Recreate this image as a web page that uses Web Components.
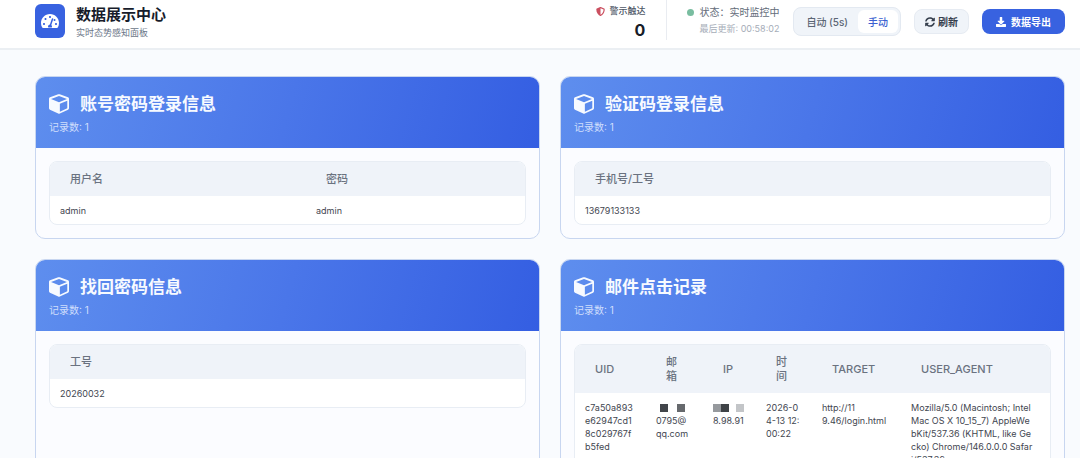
<!DOCTYPE html>
<html lang="zh-CN">
<head>
<meta charset="utf-8">
<title>数据展示中心</title>
<style>
html, body { margin: 0; background: #f9fbfe; }
body { font-family: Inter, "Noto Sans CJK SC", sans-serif; font-size: 10px; line-height: 14px; color: #3f4856; overflow: hidden; }
</style>
</head>
<body>
<data-dashboard></data-dashboard>

<template id="t-dashboard">
<style>
:host { display: block; }
main { display: grid; grid-template-columns: 1fr 1fr; gap: 20px; padding: 26px 15px 26px 35px; }
</style>
<top-bar></top-bar>
<main>
  <info-card heading="账号密码登录信息" count="1">
    <data-table data='{"cols":["用户名","密码"],"widths":[256,0],"row":["admin","admin"]}'></data-table>
  </info-card>
  <info-card heading="验证码登录信息" count="1">
    <data-table data='{"cols":["手机号/工号"],"widths":[0],"row":["13679133133"]}'></data-table>
  </info-card>
  <info-card heading="找回密码信息" count="1">
    <data-table data='{"cols":["工号"],"widths":[0],"row":["20260032"]}'></data-table>
  </info-card>
  <info-card heading="邮件点击记录" count="1">
    <data-table data='{"cols":["UID","邮箱","IP","时间","TARGET","USER_AGENT"],"widths":[71,57,53,56,89,0],"row":["c7a50a893e62947cd18c029767fb5fed","[mail]0795@|qq.com","[ip]8.98.91","2026-04-13 12:00:22","[url]9.46/login.html","Mozilla/5.0 (Macintosh; Intel|Mac OS X 10_15_7) AppleWe|bKit/537.36 (KHTML, like Ge|cko) Chrome/146.0.0.0 Safar|i/537.36"]}'></data-table>
  </info-card>
</main>
</template>

<template id="t-bar">
<style>
:host { display: block; background: #fff; border-bottom: 2px solid #ebeff3; }
header { display: flex; align-items: flex-start; justify-content: space-between; height: 48px; padding: 0 15px 0 35px; box-sizing: border-box; }
.brand, .tools { display: flex; align-items: flex-start; }
.brand { gap: 11px; }
.logo { display: grid; place-items: center; width: 30px; height: 34px; margin-top: 4px; border-radius: 6px; background: #3862e0; color: #fff; }
h1 { margin: 5px 0 0; font-size: 15px; line-height: 20px; font-weight: 700; color: #171c2b; }
.sub { margin: 1px 0 0; font-size: 9px; line-height: 14px; color: #6b7687; }
.alert { text-align: right; padding: 4px 21px 0 0; border-right: 1px solid #e9ecf1; height: 36px; }
.label { display: flex; align-items: center; gap: 4px; font-size: 9px; font-weight: 500; color: #4d5665; }
.label svg { color: #cb4f60; }
.num { font-size: 16px; line-height: 24px; font-weight: 700; color: #171c28; }
.status { text-align: right; padding: 4px 0 0 20px; }
.state { display: flex; align-items: center; justify-content: flex-end; gap: 5px; line-height: 16px; color: #636c79; }
.dot { width: 7px; height: 7px; border-radius: 50%; background: #79bda0; }
.time { font-size: 9px; line-height: 18px; color: #a6adb8; }
.seg { display: flex; box-sizing: border-box; height: 29px; margin: 7px 0 0 14px; padding: 2px; border: 1px solid #e3e9f1; border-radius: 8px; background: #f0f4f9; }
button { font: inherit; margin: 0; border: 0; background: none; display: flex; align-items: center; justify-content: center; box-sizing: border-box; padding: 0; white-space: nowrap; }
.seg button { padding: 0 10px; color: #5c6675; font-weight: 500; }
.seg button.on { background: #fff; color: #3b5fd0; border-radius: 6px; }
.refresh, .export { height: 25px; margin: 9px 0 0 13px; border-radius: 8px; gap: 3px; font-weight: 700; }
.refresh { padding: 0 10px; background: #f0f4f9; border: 1px solid #e6ebf2; color: #363f4d; }
.export { padding: 0 14px; background: #3862e0; color: #fff; font-weight: 600; gap: 5px; }
svg { display: block; fill: currentColor; }
</style>
<header>
  <div class="brand">
    <div class="logo"><svg width="18" height="16" viewBox="0 0 576 512"><path d="M288 32C129 32 0 161 0 320c0 53 14 102 39 145 6 9 16 15 27 15h444c11 0 21-6 27-15 25-43 39-92 39-145C576 161 447 32 288 32zm0 64c18 0 32 14 32 32s-14 32-32 32-32-14-32-32 14-32 32-32zM96 384c-18 0-32-14-32-32s14-32 32-32 32 14 32 32-14 32-32 32zm48-160c-18 0-32-14-32-32s14-32 32-32 32 14 32 32-14 32-32 32zm247-25-61 184c14 12 22 29 22 49 0 12-3 22-9 32H233c-5-10-9-20-9-32 0-34 28-62 61-64l61-184c4-12 17-19 30-15 12 4 19 17 15 30zm15 10c6-9 15-17 26-17 18 0 32 14 32 32s-14 32-32 32-26-10-31-22zm74 175c-18 0-32-14-32-32s14-32 32-32 32 14 32 32-14 32-32 32z"/></svg></div>
    <div><h1>数据展示中心</h1><p class="sub">实时态势感知面板</p></div>
  </div>
  <div class="tools">
    <div class="alert">
      <div class="label"><svg width="9" height="9" viewBox="0 0 512 512"><path d="M466 84 274 4a48 48 0 0 0-37 0L45 84c-18 7-29 25-29 44 0 199 114 336 221 380 12 5 25 5 37 0 86-36 222-159 222-380 0-19-12-37-30-44zM256 446V66l176 74c-3 151-82 259-176 306z"/></svg>警示触达</div>
      <div class="num">0</div>
    </div>
    <div class="status">
      <div class="state"><span class="dot"></span><span>状态：实时监控中</span></div>
      <div class="time">最后更新: 00:58:02</div>
    </div>
    <div class="seg"><button type="button">自动 (5s)</button><button type="button" class="on">手动</button></div>
    <button type="button" class="refresh"><svg width="10" height="10" viewBox="0 0 512 512"><path d="M371 133c-32-30-73-46-116-46-79 0-147 54-165 128-2 5-6 9-12 9H21c-7 0-13-7-12-14C31 94 133 8 256 8c67 0 128 26 173 69l35-35c15-16 41-5 41 17v133c0 13-11 24-24 24H347c-21 0-32-26-17-41l41-42zM32 296h134c21 0 32 26 17 41l-41 42c32 30 73 46 116 46 77 0 146-53 165-128 2-5 6-9 12-9h57c7 0 13 7 12 14-22 116-124 202-248 202-67 0-128-26-173-69l-35 35c-15 16-41 5-41-17V320c0-13 11-24 24-24z"/></svg>刷新</button>
    <button type="button" class="export"><svg width="10" height="10" viewBox="0 0 512 512"><path d="M216 0h80c13 0 24 11 24 24v168h88c18 0 27 21 14 34L270 378c-7 7-20 7-27 0L90 226c-13-13-4-34 14-34h88V24c0-13 11-24 24-24zm296 376v112c0 13-11 24-24 24H24c-13 0-24-11-24-24V376c0-13 11-24 24-24h147l49 49c20 20 52 20 72 0l49-49h147c13 0 24 11 24 24z"/></svg>数据导出</button>
  </div>
</header>
</template>

<template id="t-card">
<style>
:host { display: block; box-sizing: border-box; min-width: 0; border: 1px solid #c8d6f0; border-radius: 10px; background: #fbfcff; overflow: hidden; }
.head { height: 71px; box-sizing: border-box; padding: 16px 14px 0 13px; background: linear-gradient(105deg, #5e8eee, #4a76e9 50%, #345ee2); color: #f7faff; }
.title { display: flex; align-items: center; gap: 11px; }
h2 { margin: 0; font-size: 17px; line-height: 22px; font-weight: 600; }
p { margin: 5px 0 0; color: #cfdefc; }
.body { padding: 13px; }
svg { display: block; fill: currentColor; }
</style>
<div class="head">
  <div class="title"><svg width="20" height="20" viewBox="0 0 512 512"><path fill-rule="evenodd" d="M236 8 26 86C10 92 0 106 0 124v242c0 16 9 30 24 37l212 98c13 6 27 6 40 0l212-98c15-7 24-21 24-37V124c0-18-10-32-26-38L276 8c-13-5-27-5-40 0zM256 52l204 76-204 84-204-84zM278 452V252l190-80v192z"/></svg><h2></h2></div>
  <p></p>
</div>
<div class="body"><slot></slot></div>
</template>

<template id="t-table">
<style>
:host { display: block; border: 1px solid #e8edf4; border-radius: 8px; background: #fff; overflow: hidden; }
table { width: 100%; table-layout: fixed; border-collapse: collapse; }
th { padding: 10px 20px; background: #eff3f9; color: #6a7280; font-size: 11px; line-height: 14px; font-weight: 500; text-align: left; }
td { padding: 8px 10px 7px; font-size: 9px; line-height: 13px; vertical-align: top; word-break: break-all; color: #3f4650; }
.mask { display: flex; align-items: center; height: 13px; white-space: nowrap; }
i { display: block; width: 8px; height: 8px; }
</style>
<table><colgroup></colgroup><thead><tr></tr></thead><tbody><tr></tr></tbody></table>
</template>

<script>
const clone = id => document.getElementById(id).content.cloneNode(true);
const MASKS = {
  mail: '<span class="mask"><i style="margin-left:4px;background:#41454a"></i><i style="margin-left:9px;background:#66696d"></i></span>',
  ip: '<span class="mask"><i style="background:#96999d"></i><i style="background:#3f4347"></i><i style="margin-left:7px;background:#c3c5c8"></i></span>',
  url: '<span class="mask">http://11</span>'
};
customElements.define('data-table', class extends HTMLElement {
  connectedCallback() {
    if (this.shadowRoot) return;
    const root = this.attachShadow({ mode: 'open' });
    root.append(clone('t-table'));
    const { cols, widths, row } = JSON.parse(this.getAttribute('data'));
    root.querySelector('colgroup').innerHTML = widths.map(w => w ? `<col style="width:${w}px">` : '<col>').join('');
    root.querySelector('thead tr').innerHTML = cols.map(c => `<th scope="col">${c}</th>`).join('');
    root.querySelector('tbody tr').innerHTML = row.map(c => `<td>${c.replace(/^\[(\w+)\]/, (m, k) => MASKS[k]).replaceAll('|', '<br>')}</td>`).join('');
  }
});
customElements.define('info-card', class extends HTMLElement {
  connectedCallback() {
    if (this.shadowRoot) return;
    const root = this.attachShadow({ mode: 'open' });
    root.append(clone('t-card'));
    root.querySelector('h2').textContent = this.getAttribute('heading');
    root.querySelector('p').textContent = '记录数: ' + this.getAttribute('count');
  }
});
for (const [name, id] of [['top-bar', 't-bar'], ['data-dashboard', 't-dashboard']]) {
  customElements.define(name, class extends HTMLElement {
    connectedCallback() {
      if (!this.shadowRoot) this.attachShadow({ mode: 'open' }).append(clone(id));
    }
  });
}
</script>
</body>
</html>
